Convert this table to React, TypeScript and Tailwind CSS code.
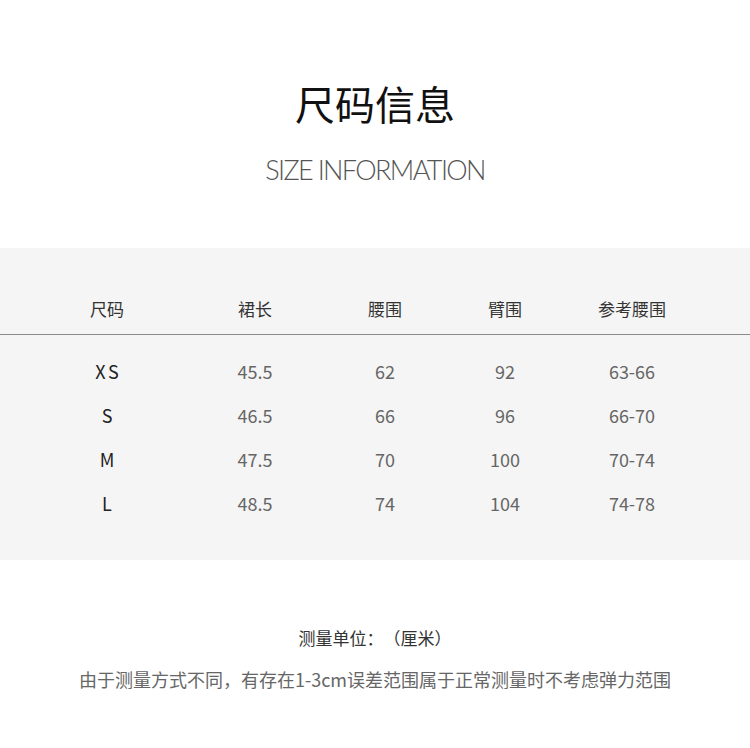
const font = { fontFamily: '"Noto Sans CJK SC", "Noto Sans", sans-serif' };

type Row = {
  size: string;
  length: string;
  waist: string;
  arm: string;
  refWaist: string;
};

const headers = ["尺码", "裙长", "腰围", "臂围", "参考腰围"];

const rows: Row[] = [
  { size: "XS", length: "45.5", waist: "62", arm: "92", refWaist: "63-66" },
  { size: "S", length: "46.5", waist: "66", arm: "96", refWaist: "66-70" },
  { size: "M", length: "47.5", waist: "70", arm: "100", refWaist: "70-74" },
  { size: "L", length: "48.5", waist: "74", arm: "104", refWaist: "74-78" },
];

const gridCols = "grid grid-cols-[148px_148px_112px_128px_126px] pl-[33px]";

const App = () => {
  return (
    <div className="w-[750px] h-[748px] bg-white overflow-hidden [text-spacing-trim:space-all]" style={font}>
      {/* TITLE */}
      <div className="flex flex-col items-center pt-[77px]">
        <h1 className="text-[40px] leading-[52px] font-normal text-[#111]">尺码信息</h1>
        <p
          className="mt-[23px] text-[27px] leading-[36px] font-light text-[#555] tracking-[-0.06em]"
          style={{ fontFamily: '"Lato", "Noto Sans", sans-serif' }}
        >
          SIZE INFORMATION
        </p>
      </div>

      {/* TABLE */}
      <div className="mt-[60px] h-[312px] bg-[#f5f5f5]">
        <div className={`${gridCols} pt-[48px] h-[87px] border-b border-[#8a8a8a]`}>
          {headers.map((h) => (
            <div key={h} className="text-center text-[17px] leading-[26px] text-[#333]">
              {h}
            </div>
          ))}
        </div>
        <div className="pt-[14px]">
          {rows.map((r) => (
            <div key={r.size} className={`${gridCols} h-[44px] items-center text-[18px] text-[#666]`}>
              <div className="text-center text-[#222] tracking-[0.15em] pl-[0.15em]">{r.size}</div>
              <div className="text-center">{r.length}</div>
              <div className="text-center">{r.waist}</div>
              <div className="text-center">{r.arm}</div>
              <div className="text-center">{r.refWaist}</div>
            </div>
          ))}
        </div>
      </div>

      {/* NOTE */}
      <div className="flex flex-col items-center pt-[65px]">
        <p className="text-[17px] leading-[26px] text-[#333]">测量单位：（厘米）</p>
        <p className="mt-[15px] text-[18px] leading-[26px] text-[#666]">
          由于测量方式不同，有存在1-3cm误差范围属于正常测量时不考虑弹力范围
        </p>
      </div>
    </div>
  );
};

export default App;
